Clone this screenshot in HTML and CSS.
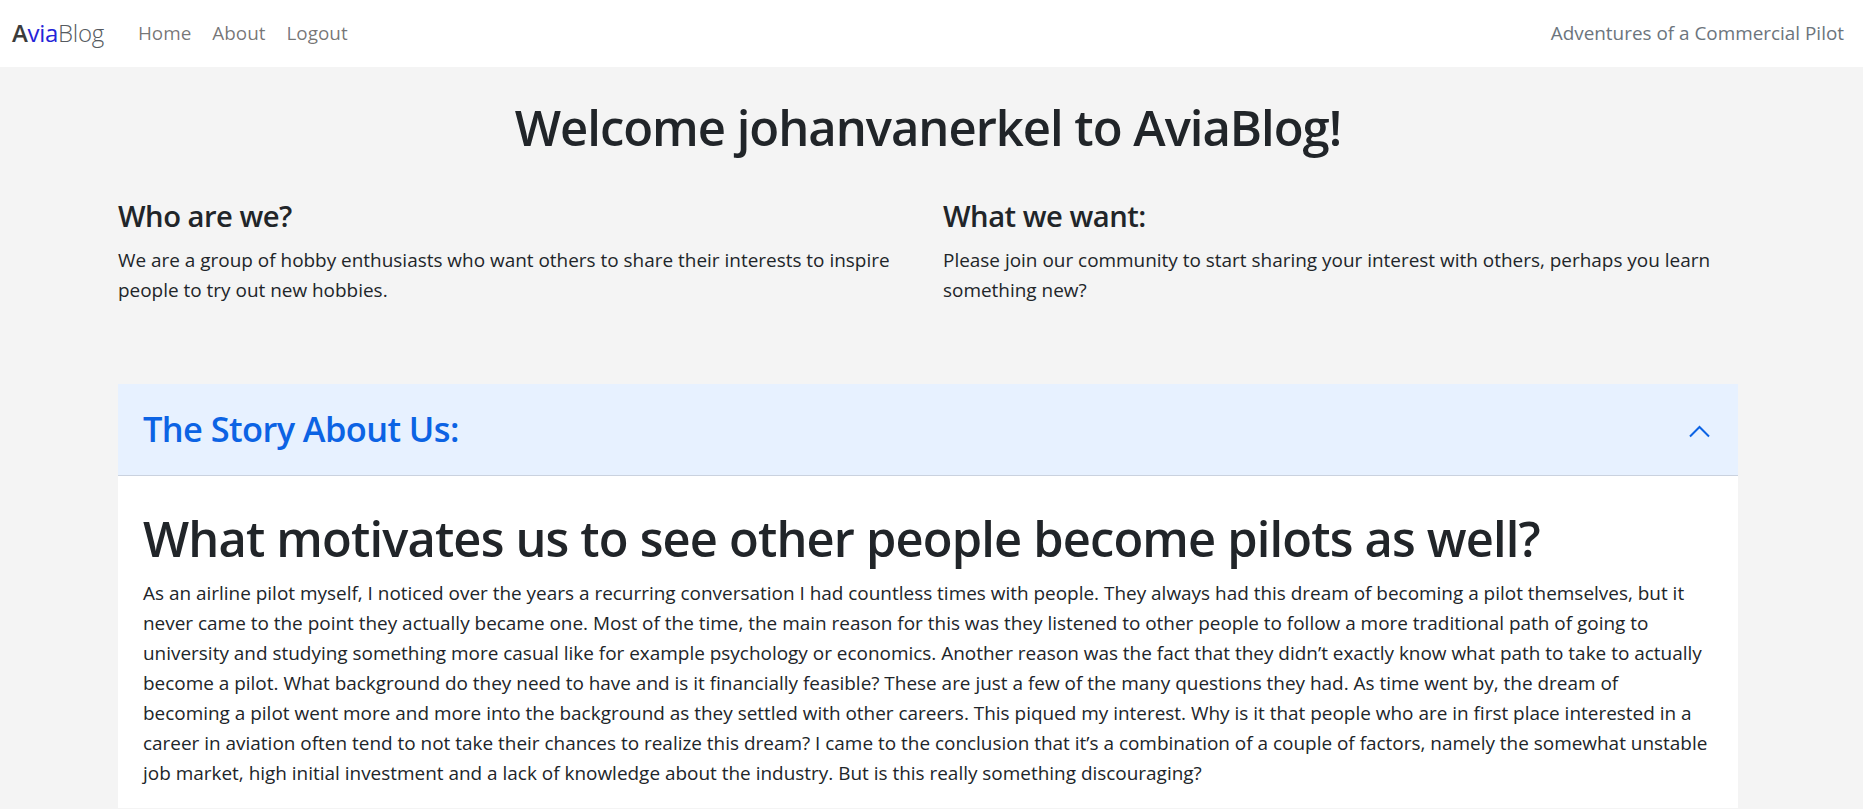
FILE: index.html
```html
<!DOCTYPE html>
<html lang="en">
<head>
<meta charset="utf-8">
<title>AviaBlog</title>
<link rel="stylesheet" href="styles.css">
</head>
<body>
<nav class="navbar">
  <div class="nav-left">
    <a class="brand" href="#"><span class="b-a">A</span><span class="b-via">via</span><span class="b-blog">Blog</span></a>
    <ul class="nav-links">
      <li><a href="#">Home</a></li>
      <li><a href="#">About</a></li>
      <li><a href="#">Logout</a></li>
    </ul>
  </div>
  <span class="nav-tagline">Adventures of a Commercial Pilot</span>
</nav>

<main class="page">
  <h1 class="welcome">Welcome johanvanerkel to AviaBlog!</h1>

  <div class="intro-row">
    <section class="intro-col">
      <h4 class="intro-title">Who are we?</h4>
      <p class="intro-text">We are a group of hobby enthusiasts who want others to share their interests to inspire people to try out new hobbies.</p>
    </section>
    <section class="intro-col">
      <h4 class="intro-title">What we want:</h4>
      <p class="intro-text">Please join our community to start sharing your interest with others, perhaps you learn something new?</p>
    </section>
  </div>

  <div class="accordion">
    <div class="acc-header">
      <h3 class="acc-title">The Story About Us:</h3>
      <svg class="acc-icon" width="25" height="25" viewBox="0 0 25 25" aria-hidden="true">
        <polyline points="3,16.5 12.5,7 22,16.5" fill="none" stroke="#0c63e4" stroke-width="2"/>
      </svg>
    </div>
    <div class="acc-body">
      <h1 class="story-title">What motivates us to see other people become pilots as well?</h1>
      <p class="story-text">As an airline pilot myself, I noticed over the years a recurring conversation I had countless times with people. They always had this dream of becoming a pilot themselves, but it<br>never came to the point they actually became one. Most of the time, the main reason for this was they listened to other people to follow a more traditional path of going to<br>university and studying something more casual like for example psychology or economics. Another reason was the fact that they didn’t exactly know what path to take to actually<br>become a pilot. What background do they need to have and is it financially feasible? These are just a few of the many questions they had. As time went by, the dream of<br>becoming a pilot went more and more into the background as they settled with other careers. This piqued my interest. Why is it that people who are in first place interested in a<br>career in aviation often tend to not take their chances to realize this dream? I came to the conclusion that it’s a combination of a couple of factors, namely the somewhat unstable<br>job market, high initial investment and a lack of knowledge about the industry. But is this really something discouraging?</p>
    </div>
  </div>
</main>
</body>
</html>
```
FILE: styles.css
```css
* { box-sizing: border-box; }

html, body {
  margin: 0;
  padding: 0;
}

body {
  background: #f4f4f4;
  color: #212529;
  font-family: "Open Sans", "Noto Sans", sans-serif;
  font-size: 18.95px;
  line-height: 30px;
  overflow: hidden;
}

a { text-decoration: none; }

/* ---------- navbar ---------- */
.navbar {
  height: 67px;
  background: #ffffff;
  display: flex;
  align-items: center;
  justify-content: space-between;
  padding: 0 19px 2px 12px;
}

.nav-left {
  display: flex;
  align-items: center;
}

.brand {
  font-size: 24px;
  line-height: 30px;
  margin-right: 32px;
  letter-spacing: -0.3px;
}
.b-a { color: #3b3b3b; font-weight: 600; }
.b-via { color: #2424d8; font-weight: 400; }
.b-blog { color: #555a60; font-weight: 300; }

.nav-links {
  list-style: none;
  margin: 0;
  padding: 0;
  display: flex;
  gap: 17px;
}
.nav-links a {
  color: rgba(0, 0, 0, 0.55);
  font-size: 18.9px;
  padding: 0 2px;
}

.nav-tagline {
  color: #6c757d;
  font-size: 18.9px;
}

/* ---------- page ---------- */
.page {
  width: 1620px;
  margin-left: 118px;
  padding-top: 31px;
}

.welcome {
  margin: 0;
  text-align: center;
  font-size: 49px;
  font-weight: 600;
  letter-spacing: -0.021em;
  line-height: 1.2;
}

.intro-row {
  display: grid;
  grid-template-columns: 780px 780px;
  column-gap: 45px;
  margin-top: 42px;
}

.intro-col { min-width: 0; }

.intro-title {
  margin: 0 0 11px;
  font-size: 29.2px;
  font-weight: 600;
  letter-spacing: -0.017em;
  line-height: 1.2;
}

.intro-text {
  margin: 0;
}

/* ---------- accordion ---------- */
.accordion {
  margin-top: 79px;
  background: #ffffff;
}

.acc-header {
  height: 92px;
  background: #e7f1ff;
  box-shadow: inset 0 -1px 0 rgba(0, 0, 0, 0.125);
  display: flex;
  align-items: center;
  justify-content: space-between;
  padding: 0 25px;
}

.acc-title {
  margin: 0 0 3px;
  color: #0c63e4;
  font-size: 34.4px;
  font-weight: 600;
  letter-spacing: -0.017em;
  line-height: 1.2;
}

.acc-icon { display: block; margin: 6px 1px 0 0; }

.acc-body {
  padding: 33px 25px 20px;
}

.story-title {
  margin: 0 0 11px;
  font-size: 48.8px;
  font-weight: 600;
  letter-spacing: -0.017em;
  line-height: 1.2;
}

.story-text {
  margin: 0;
}
```
